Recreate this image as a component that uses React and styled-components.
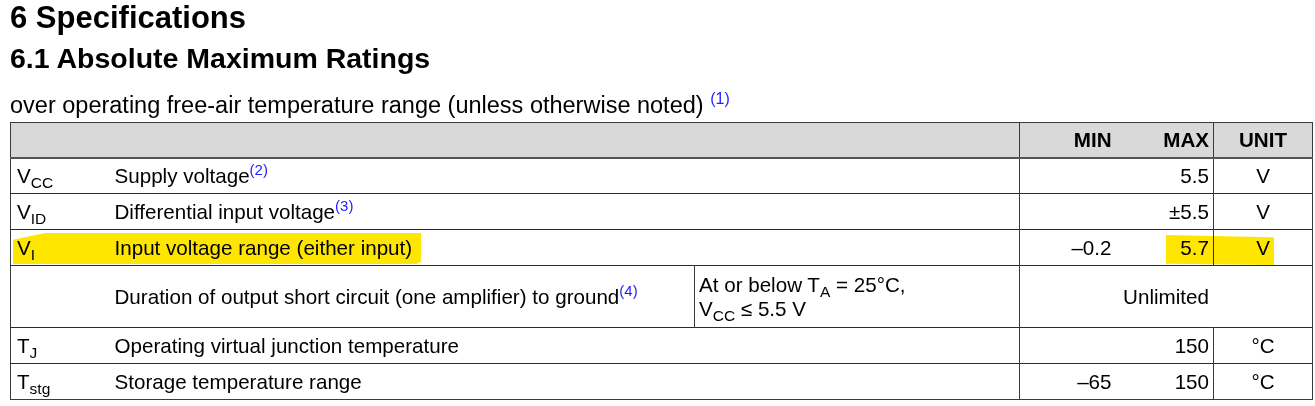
import React from "react";
import styled, { createGlobalStyle } from "styled-components";

const Global = createGlobalStyle`
  html, body {
    margin: 0;
    padding: 0;
    background: #ffffff;
  }
  body {
    font-family: "Liberation Sans", Arial, sans-serif;
    color: #000000;
  }
`;

const Page = styled.div`
  display: flex;
  flex-direction: column;
  padding-left: 10px;
  width: 1305px;
`;

const Title = styled.h1`
  margin: 0;
  font-size: 31px;
  line-height: 36px;
  font-weight: bold;
`;

const SubTitle = styled.h2`
  margin: 6px 0 0 0;
  font-size: 28.5px;
  line-height: 33px;
  font-weight: bold;
`;

const Caption = styled.p`
  margin: 17px 0 0 0;
  font-size: 23.5px;
  line-height: 27px;
`;

const Note = styled.sup`
  color: #1f1fff;
  font-size: ${p => p.$size || 15}px;
  vertical-align: ${p => p.$raise || 8}px;
  line-height: 0;
`;

const Sub = styled.sub`
  font-size: 15.5px;
  vertical-align: -5px;
  line-height: 0;
`;

const TableWrap = styled.div`
  position: relative;
  margin-top: 3px;
  width: 1302px;
`;

const Table = styled.table`
  border-collapse: collapse;
  table-layout: fixed;
  width: 1302px;
  border: 1px solid #3a3a3a;
  font-size: 20.6px;
  line-height: 24px;
`;

const Col = styled.col`
  width: ${p => p.$w}px;
`;

const HeadRow = styled.tr`
  height: 35px;
  background: #d9d9d9;
  border-bottom: 2px solid #555555;
`;

const Row = styled.tr`
  height: ${p => p.$h || 36}px;
  border-top: 1px solid #2b2b2b;
`;

const Cell = styled.td`
  padding: 0 4px;
  vertical-align: middle;
  text-align: ${p => p.$align || "left"};
  border-left: ${p => (p.$line ? "1px solid #3a3a3a" : "none")};
  font-weight: ${p => (p.$bold ? "bold" : "normal")};
  white-space: nowrap;
`;

const Symbol = styled(Cell)`
  padding-left: 6px;
`;

const Desc = styled(Cell)`
  padding-left: 4px;
`;

const Cond = styled(Cell)`
  padding: 0 4px;
  vertical-align: top;
  padding-top: 7px;
  white-space: normal;
`;

const Mark = styled.div`
  position: absolute;
  left: ${p => p.$x}px;
  top: ${p => p.$y}px;
  width: ${p => p.$w}px;
  height: ${p => p.$h}px;
  background: #ffe600;
  mix-blend-mode: multiply;
  pointer-events: none;
  clip-path: ${p => p.$clip || "none"};
`;

const rows = [
  { sym: "V", sub: "CC", desc: "Supply voltage", note: "(2)", min: "", max: "5.5", unit: "V" },
  { sym: "V", sub: "ID", desc: "Differential input voltage", note: "(3)", min: "", max: "±5.5", unit: "V" },
  { sym: "V", sub: "I", desc: "Input voltage range (either input)", min: "–0.2", max: "5.7", unit: "V" },
];

const rows2 = [
  { sym: "T", sub: "J", desc: "Operating virtual junction temperature", min: "", max: "150", unit: "°C" },
  { sym: "T", sub: "stg", desc: "Storage temperature range", min: "–65", max: "150", unit: "°C" },
];

function RatingRow({ r }) {
  return (
    <Row>
      <Symbol>
        {r.sym}
        <Sub>{r.sub}</Sub>
      </Symbol>
      <Desc colSpan={2}>
        {r.desc}
        {r.note && <Note>{r.note}</Note>}
      </Desc>
      <Cell $line $align="right">{r.min}</Cell>
      <Cell $align="right">{r.max}</Cell>
      <Cell $line $align="center">{r.unit}</Cell>
    </Row>
  );
}

export default function App() {
  return (
    <>
      <Global />
      <Page>
        <Title>6 Specifications</Title>
        <SubTitle>6.1 Absolute Maximum Ratings</SubTitle>
        <Caption>
          over operating free-air temperature range (unless otherwise noted){" "}
          <Note $size={16} $raise={9}>(1)</Note>
        </Caption>
        <TableWrap>
          <Table>
            <colgroup>
              <Col $w={100} />
              <Col $w={584} />
              <Col $w={325} />
              <Col $w={96} />
              <Col $w={98} />
              <Col $w={99} />
            </colgroup>
            <tbody>
              <HeadRow>
                <Cell colSpan={3} />
                <Cell $line $bold $align="right">MIN</Cell>
                <Cell $bold $align="right">MAX</Cell>
                <Cell $line $bold $align="center">UNIT</Cell>
              </HeadRow>
              {rows.map(r => (
                <RatingRow key={r.desc} r={r} />
              ))}
              <Row $h={62}>
                <Symbol />
                <Desc>
                  Duration of output short circuit (one amplifier) to ground
                  <Note>(4)</Note>
                </Desc>
                <Cond $line>
                  At or below T<Sub>A</Sub> = 25°C,
                  <br />
                  V<Sub>CC</Sub> ≤ 5.5 V
                </Cond>
                <Cell $line $align="center" colSpan={3}>
                  Unlimited
                </Cell>
              </Row>
              {rows2.map(r => (
                <RatingRow key={r.desc} r={r} />
              ))}
            </tbody>
          </Table>
          <Mark
            $x={3}
            $y={111}
            $w={408}
            $h={31}
            $clip="polygon(32px 0, 100% 0, 100% 92%, 99% 100%, 0 100%, 0 22%)"
          />
          <Mark $x={1156} $y={113} $w={108} $h={30} $clip="polygon(0 0, 100% 8%, 100% 100%, 0 96%)" />
        </TableWrap>
      </Page>
    </>
  );
}
